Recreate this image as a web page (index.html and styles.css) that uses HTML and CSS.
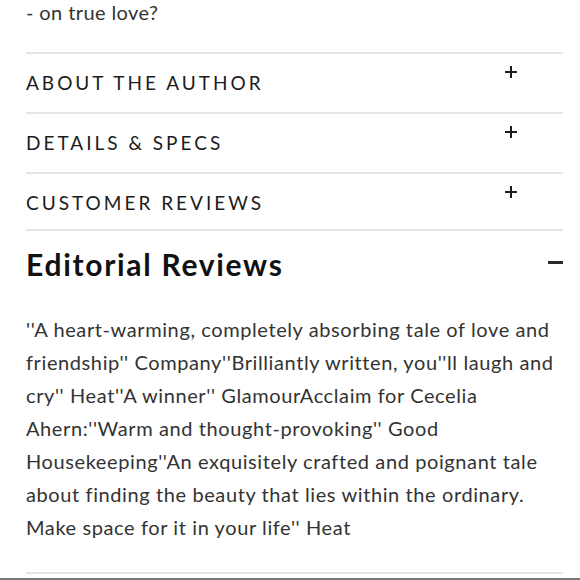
FILE: index.html
```html
<!DOCTYPE html>
<html lang="en">
<head>
  <meta charset="UTF-8" />
  <meta name="viewport" content="width=device-width, initial-scale=1.0"/>
  <title>Book Details</title>
  <link rel="stylesheet" href="styles.css">
</head>
<body>

  <div class="product-info">
    <!-- tail of the description -->
    <p class="description">- on true love?</p>

    <div class="accordion">
      <div class="acc-item">
        <h3 class="acc-title">About the Author</h3>
        <span class="acc-toggle plus"></span>
      </div>
      <div class="acc-item">
        <h3 class="acc-title">Details &amp; Specs</h3>
        <span class="acc-toggle plus"></span>
      </div>
      <div class="acc-item">
        <h3 class="acc-title">Customer Reviews</h3>
        <span class="acc-toggle plus"></span>
      </div>

      <!-- open section -->
      <div class="acc-item open">
        <div class="acc-head">
          <h2 class="acc-heading">Editorial Reviews</h2>
          <span class="acc-toggle minus"></span>
        </div>
        <p class="acc-body">''A heart-warming, completely absorbing tale of love and friendship'' Company''Brilliantly written, you''ll laugh and cry'' Heat''A winner'' GlamourAcclaim for Cecelia Ahern:''Warm and thought-provoking'' Good Housekeeping''An exquisitely crafted and poignant tale about finding the beauty that lies within the ordinary. Make space for it in your life'' Heat</p>
      </div>
    </div>
  </div>

  <div class="page-edge"></div>

</body>
</html>
```

FILE: styles.css
```css
body {
  margin: 0;
  background-color: #ffffff;
  font-family: Lato, "Open Sans", sans-serif;
  color: #2b2b2b;
}

.product-info {
  padding: 0 17px 0 26px;
}

.description {
  margin: 0;
  font-size: 20px;
  line-height: 24px;
  letter-spacing: 0.4px;
  color: #333;
}

.accordion {
  margin-top: 28px;
}

.acc-item {
  display: flex;
  justify-content: space-between;
  align-items: flex-start;
  border-top: 2px solid #e4e4e4;
  height: 58px;
}

.acc-item:nth-child(3) {
  height: 55px;
}

.acc-title {
  margin: 17px 0 0;
  font-size: 19px;
  font-weight: 400;
  line-height: 24px;
  letter-spacing: 3px;
  text-transform: uppercase;
  color: #1c1c1c;
}

.acc-toggle {
  position: relative;
  display: block;
}

.plus {
  width: 12px;
  height: 12px;
  margin: 12px 46px 0 0;
}

.plus::before,
.plus::after {
  content: "";
  position: absolute;
  background-color: #1c1c1c;
}

.plus::before {
  left: 0;
  top: 5px;
  width: 12px;
  height: 2px;
}

.plus::after {
  left: 5px;
  top: 0;
  width: 2px;
  height: 12px;
}

.acc-item.open {
  display: block;
  height: auto;
  border-bottom: 2px solid #e4e4e4;
}

.acc-head {
  display: flex;
  justify-content: space-between;
  align-items: flex-start;
}

.acc-heading {
  margin: 15px 0 0;
  font-size: 30px;
  font-weight: 700;
  line-height: 36px;
  letter-spacing: 1.7px;
  color: #111;
}

.minus {
  width: 15px;
  height: 3px;
  margin-top: 30px;
  background-color: #2a2a2a;
}

.acc-body {
  margin: 31px 0 0;
  padding-bottom: 28px;
  font-size: 20px;
  line-height: 33px;
  letter-spacing: 0.6px;
  color: #333;
}

.page-edge {
  margin-top: 4px;
  border-top: 2px solid #777;
}
```
